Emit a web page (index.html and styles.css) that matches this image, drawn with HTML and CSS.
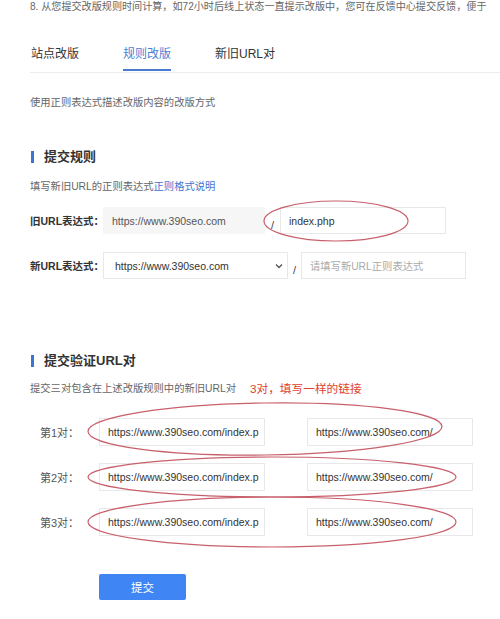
FILE: index.html
```html
<!DOCTYPE html>
<html lang="zh-CN">
<head>
<meta charset="utf-8">
<title>规则改版</title>
<link rel="stylesheet" href="styles.css">
</head>
<body>
<div class="page">
  <p class="notice">8. 从您提交改版规则时间计算，如72小时后线上状态一直提示改版中，您可在反馈中心提交反馈，便于</p>

  <nav class="tabs">
    <span class="tab">站点改版</span>
    <span class="tab active">规则改版</span>
    <span class="tab">新旧URL对</span>
  </nav>

  <p class="desc">使用正则表达式描述改版内容的改版方式</p>

  <h2 class="section-title">提交规则</h2>
  <p class="hint hint-rule">填写新旧URL的正则表达式<a class="link" href="#">正则格式说明</a></p>

  <div class="rule-row rule-old">
    <span class="rule-label">旧URL表达式：</span>
    <span class="field field-disabled field-domain">https://www.390seo.com</span>
    <span class="slash slash-old">/</span>
    <span class="field field-path">index.php</span>
  </div>

  <div class="rule-row rule-new">
    <span class="rule-label">新URL表达式：</span>
    <span class="field field-select">https://www.390seo.com
      <svg class="chev" width="8" height="6" viewBox="0 0 8 6"><path d="M1 1.5 L4 4.5 L7 1.5" fill="none" stroke="#555" stroke-width="1.3"/></svg>
    </span>
    <span class="slash slash-new">/</span>
    <span class="field field-new placeholder">请填写新URL正则表达式</span>
  </div>

  <h2 class="section-title section-two">提交验证URL对</h2>
  <p class="hint hint-pairs">提交三对包含在上述改版规则中的新旧URL对<span class="note-red">3对，填写一样的链接</span></p>

  <div class="pairs">
    <div class="pair-row">
      <span class="pair-label">第1对：</span>
      <span class="field pair-field">https://www.390seo.com/index.p</span>
      <span class="field pair-field pair-right">https://www.390seo.com/</span>
    </div>
    <div class="pair-row">
      <span class="pair-label">第2对：</span>
      <span class="field pair-field">https://www.390seo.com/index.p</span>
      <span class="field pair-field pair-right">https://www.390seo.com/</span>
    </div>
    <div class="pair-row">
      <span class="pair-label">第3对：</span>
      <span class="field pair-field">https://www.390seo.com/index.p</span>
      <span class="field pair-field pair-right">https://www.390seo.com/</span>
    </div>
  </div>

  <button class="submit" type="button">提交</button>
</div>

<svg class="marks" width="500" height="619" viewBox="0 0 500 619">
  <g fill="none" stroke="#c8606c" stroke-width="1.2">
    <ellipse cx="336" cy="221" rx="72" ry="20"/>
    <ellipse cx="265" cy="429" rx="177" ry="26" transform="rotate(-0.8 265 429)"/>
    <ellipse cx="272" cy="477" rx="184" ry="20"/>
    <ellipse cx="272" cy="522" rx="184" ry="25"/>
  </g>
</svg>
</body>
</html>
```

FILE: styles.css
```css
* { box-sizing: border-box; }

html, body {
  margin: 0;
  padding: 0;
  background: #ffffff;
}

body {
  position: relative;
  width: 500px;
  height: 619px;
  overflow: hidden;
  font-family: "Liberation Sans", "Noto Sans CJK SC", sans-serif;
  color: #333;
}

.page {
  padding-left: 30px;
}

p, h2 { margin: 0; }

.notice {
  font-size: 10.1px;
  line-height: 14px;
  color: #666;
  white-space: nowrap;
  overflow: hidden;
}

.tabs {
  display: flex;
  gap: 44px;
  margin-top: 32px;
  padding-bottom: 1px;
  border-bottom: 1px solid #ececec;
}

.tab {
  font-size: 12px;
  line-height: 16px;
  color: #333;
  padding-bottom: 7px;
  border-bottom: 2px solid transparent;
}

.tab:first-child { margin-left: 1px; }

.tab.active {
  color: #4a7fd6;
  border-bottom-color: #4a7bd2;
}

.desc {
  margin-top: 23px;
  font-size: 10.3px;
  line-height: 14px;
  color: #666;
}

.section-title {
  display: flex;
  align-items: center;
  margin-top: 38px;
  font-size: 13px;
  line-height: 18px;
  font-weight: bold;
  color: #333;
}

.section-title::before {
  content: "";
  width: 3px;
  height: 12px;
  margin: 0 10px 0 1px;
  background: #3c74d4;
}

.hint {
  font-size: 10.3px;
  line-height: 14px;
  color: #666;
}

.hint-rule { margin-top: 14px; }

.link {
  color: #3f74d2;
  text-decoration: none;
}

.rule-row {
  display: flex;
  align-items: stretch;
  height: 27px;
}

.rule-old { margin-top: 13px; }
.rule-new { margin-top: 18px; }

.rule-label {
  flex: none;
  width: 73px;
  display: flex;
  align-items: center;
  white-space: nowrap;
  font-size: 10.5px;
  font-weight: bold;
  color: #333;
}

.field {
  flex: none;
  display: flex;
  align-items: center;
  border: 1px solid #e8e8e8;
  background: #fff;
  font-size: 10.5px;
  color: #333;
  padding-left: 8px;
  white-space: nowrap;
  overflow: hidden;
}

.field-disabled {
  background: #f6f6f6;
  border-color: #f6f6f6;
  color: #555;
}

.field-domain { width: 162px; }
.field-path { width: 166px; }

.slash {
  flex: none;
  display: flex;
  align-items: flex-end;
  justify-content: center;
  padding-bottom: 3px;
  font-size: 11px;
  color: #444;
}

.slash-old { width: 15px; }
.slash-new { width: 13px; }

.field-select {
  width: 185px;
  padding-left: 11px;
  justify-content: space-between;
  padding-right: 4px;
}

.chev { flex: none; }

.field-new {
  width: 165px;
  font-size: 10.3px;
}

.placeholder { color: #aaa; }

.section-two { margin-top: 73px; }

.hint-pairs {
  margin-top: 12px;
  display: flex;
  align-items: center;
}

.note-red {
  margin-left: 14px;
  font-size: 11.7px;
  color: #e0412f;
}

.pairs {
  margin-top: 22px;
  display: flex;
  flex-direction: column;
  gap: 17px;
}

.pair-row {
  display: flex;
  align-items: stretch;
  height: 28px;
}

.pair-label {
  flex: none;
  width: 69px;
  padding-left: 10px;
  display: flex;
  align-items: center;
  font-size: 11px;
  color: #555;
}

.pair-field { width: 166px; }

.pair-right { margin-left: 42px; }

.submit {
  display: block;
  margin: 38px 0 0 69px;
  width: 87px;
  height: 26px;
  border: none;
  border-radius: 2px;
  background: #3f86f4;
  color: #fff;
  font-family: "Liberation Sans", "Noto Sans CJK SC", sans-serif;
  font-size: 11.5px;
}

.marks {
  position: absolute;
  top: 0;
  left: 0;
  pointer-events: none;
}
```
